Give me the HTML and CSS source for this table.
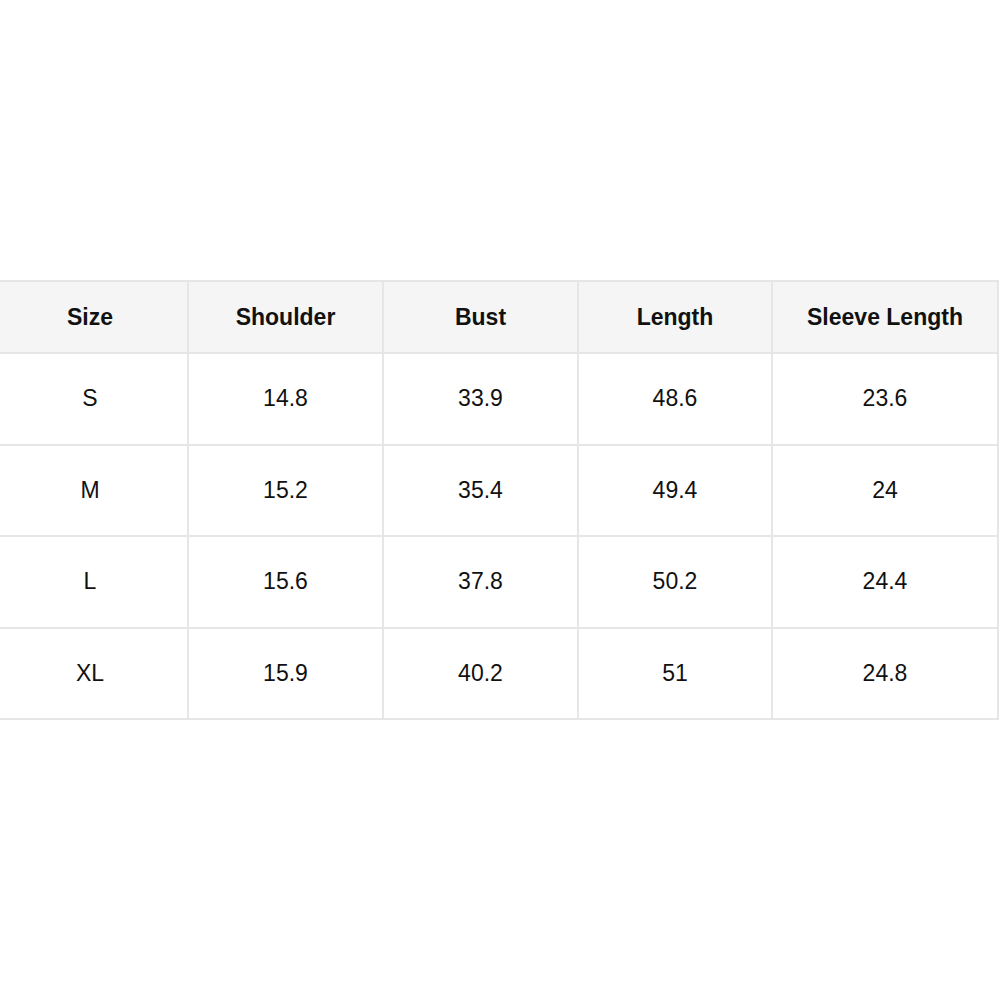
FILE: index.html
```html
<!DOCTYPE html>
<html>
<head>
<meta charset="utf-8">
<link rel="stylesheet" href="styles.css">
</head>
<body>
<table class="size-table">
  <colgroup>
    <col class="c1"><col class="c2"><col class="c3"><col class="c4"><col class="c5">
  </colgroup>
  <thead>
    <tr><th>Size</th><th>Shoulder</th><th>Bust</th><th>Length</th><th>Sleeve Length</th></tr>
  </thead>
  <tbody>
    <tr><td>S</td><td>14.8</td><td>33.9</td><td>48.6</td><td>23.6</td></tr>
    <tr><td>M</td><td>15.2</td><td>35.4</td><td>49.4</td><td>24</td></tr>
    <tr><td>L</td><td>15.6</td><td>37.8</td><td>50.2</td><td>24.4</td></tr>
    <tr><td>XL</td><td>15.9</td><td>40.2</td><td>51</td><td>24.8</td></tr>
  </tbody>
</table>
</body>
</html>
```
FILE: styles.css
```css
html, body {
  margin: 0;
  padding: 0;
  background: #ffffff;
}
body {
  font-family: "Liberation Sans", Arial, sans-serif;
  color: #111111;
  overflow: hidden;
}
.size-table {
  margin-top: 280px;
  margin-left: -9px;
  border-collapse: collapse;
  table-layout: fixed;
  width: 1006px;
}
.c1 { width: 196px; }
.c2 { width: 195px; }
.c3 { width: 195px; }
.c4 { width: 194px; }
.c5 { width: 226px; }
.size-table th,
.size-table td {
  border: 2px solid #e6e6e6;
  text-align: center;
  font-size: 23px;
  padding: 0;
}
.size-table th {
  background: #f5f5f5;
  font-weight: bold;
  height: 70px;
}
.size-table td {
  height: 89.5px;
}
```
